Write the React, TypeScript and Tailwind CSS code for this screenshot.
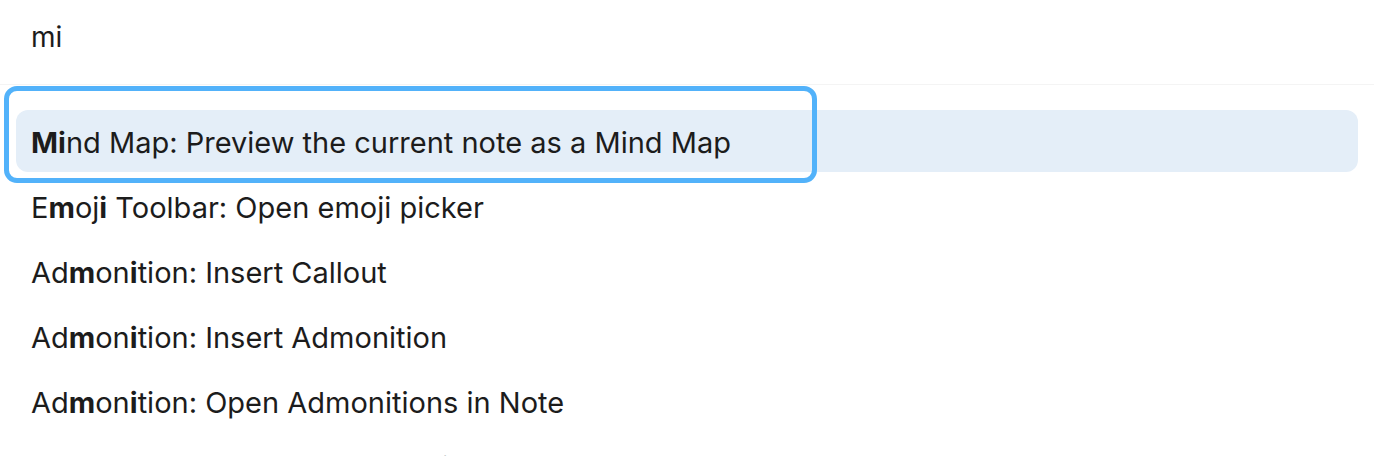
import React from "react";

// Each command label is split into plain / matched parts
type Part = { text: string; match?: boolean };

const commands: Part[][] = [
  [{ text: "Mi", match: true }, { text: "nd Map: Preview the current note as a Mind Map" }],
  [
    { text: "E" },
    { text: "m", match: true },
    { text: "oj" },
    { text: "i", match: true },
    { text: " Toolbar: Open emoji picker" },
  ],
  [
    { text: "Ad" },
    { text: "m", match: true },
    { text: "on" },
    { text: "i", match: true },
    { text: "tion: Insert Callout" },
  ],
  [
    { text: "Ad" },
    { text: "m", match: true },
    { text: "on" },
    { text: "i", match: true },
    { text: "tion: Insert Admonition" },
  ],
  [
    { text: "Ad" },
    { text: "m", match: true },
    { text: "on" },
    { text: "i", match: true },
    { text: "tion: Open Admonitions in Note" },
  ],
  [
    { text: "Calendar: Open " },
    { text: "m", match: true },
    { text: "onthly note " },
    { text: "i", match: true },
    { text: "n sidebar" },
  ],
];

const App: React.FC = () => {
  return (
    <div
      className="relative w-[1374px] h-[456px] overflow-hidden bg-white text-[#1c1c1c]"
      style={{ fontFamily: "Inter, 'Noto Sans', sans-serif" }}
    >
      {/* Search input */}
      <div className="h-[85px] border-b border-[#f4f4f4] px-[31px] pt-[17px]">
        <div className="text-[28px] leading-[40px]">mi</div>
      </div>

      {/* Results */}
      <div className="flex flex-col gap-[3px] pt-[25px]">
        {commands.map((parts, i) => (
          <div
            key={i}
            className={`mx-[16px] h-[62px] flex items-center px-[15px] pt-[3px] rounded-[12px] text-[29px] whitespace-nowrap ${
              i === 0 ? "bg-[#e4eef8]" : ""
            }`}
          >
            <span>
              {parts.map((p, j) => (
                <span key={j} className={p.match ? "font-bold" : ""}>
                  {p.text}
                </span>
              ))}
            </span>
          </div>
        ))}
      </div>

      {/* Focus ring overlay */}
      <div className="absolute left-[4px] top-[86px] w-[813px] h-[97px] rounded-[13px] border-[5px] border-[#52b2fa] pointer-events-none" />
    </div>
  );
};

export default App;
